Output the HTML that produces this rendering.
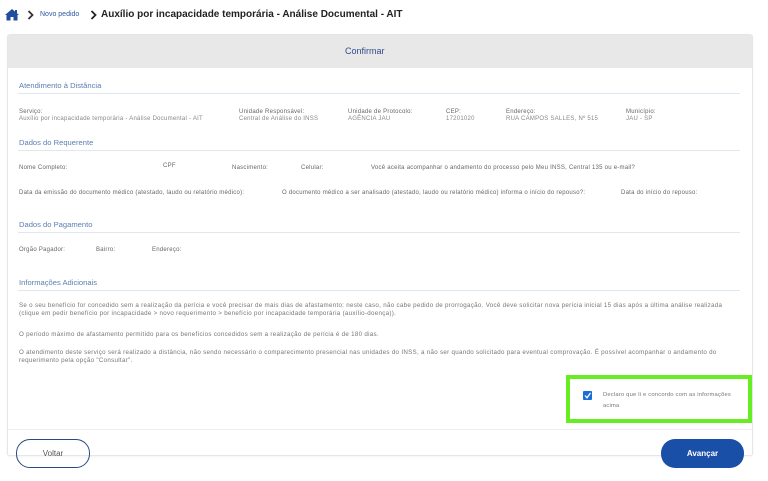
<!DOCTYPE html>
<html><head><meta charset="utf-8"><style>
*{margin:0;padding:0;box-sizing:border-box}
body{width:768px;height:481px;background:#fff;font-family:"Liberation Sans",sans-serif;position:relative;overflow:hidden;color:#555}
.a{position:absolute;white-space:nowrap}
.t{font-size:6px;color:#666;letter-spacing:0.25px}
.v{font-size:6px;color:#888;letter-spacing:0.25px}
.h{font-size:7.6px;color:#5a7fb0}
.line{position:absolute;left:18px;width:722px;height:1px;background:#dfe8ee}
.p{position:absolute;left:19px;font-size:6.2px;color:#777;line-height:8px;width:720px;letter-spacing:0.3px}
</style></head><body>
<svg class="a" style="left:4px;top:8px" width="16" height="13" viewBox="0 0 16 13"><path d="M8 1 L1 7 L2.5 7 L2.5 12.5 L6.5 12.5 L6.5 9 L9.5 9 L9.5 12.5 L13.5 12.5 L13.5 7 L15 7 Z" fill="#1e4e9c"/><rect x="11" y="2" width="2" height="3" fill="#1e4e9c"/></svg>
<svg class="a" style="left:27px;top:10px" width="7" height="10"><path d="M1.5 1 L5.5 5 L1.5 9" stroke="#333" stroke-width="1.8" fill="none"/></svg>
<div class="a" style="left:40px;top:11px;font-size:7px;color:#2c5aa0">Novo pedido</div>
<svg class="a" style="left:90px;top:10px" width="7" height="10"><path d="M1.5 1 L5.5 5 L1.5 9" stroke="#222" stroke-width="1.8" fill="none"/></svg>
<div class="a" style="left:101px;top:9px;font-size:10px;color:#222;font-weight:bold">Auxílio por incapacidade temporária - Análise Documental - AIT</div>

<div class="a" style="left:7px;top:34px;width:746px;height:422px;border:1px solid #e6e6e6;border-radius:3px;background:#fff;box-shadow:0 1px 2px rgba(0,0,0,.05)"></div>
<div class="a" style="left:8px;top:35px;width:744px;height:33px;background:#e8e8e8"></div>
<div class="a" style="left:345px;top:46px;font-size:9px;color:#2f4f8a">Confirmar</div>

<div class="a h" style="left:19px;top:81px">Atendimento à Distância</div>
<div class="line" style="top:93px"></div>
<div class="a t" style="left:19px;top:109px">Serviço:</div>
<div class="a v" style="left:19px;top:116px">Auxílio por incapacidade temporária - Análise Documental - AIT</div>
<div class="a t" style="left:239px;top:109px">Unidade Responsável:</div>
<div class="a v" style="left:239px;top:116px">Central de Análise do INSS</div>
<div class="a t" style="left:348px;top:109px">Unidade de Protocolo:</div>
<div class="a v" style="left:348px;top:116px">AGÊNCIA JAU</div>
<div class="a t" style="left:446px;top:109px">CEP:</div>
<div class="a v" style="left:446px;top:116px">17201020</div>
<div class="a t" style="left:506px;top:109px">Endereço:</div>
<div class="a v" style="left:506px;top:116px">RUA CAMPOS SALLES, Nº 515</div>
<div class="a t" style="left:626px;top:109px">Município:</div>
<div class="a v" style="left:626px;top:116px">JAU - SP</div>

<div class="a h" style="left:19px;top:138px">Dados do Requerente</div>
<div class="line" style="top:150px"></div>
<div class="a t" style="left:19px;top:165px">Nome Completo:</div>
<div class="a t" style="left:163px;top:163px">CPF</div>
<div class="a t" style="left:232px;top:165px">Nascimento:</div>
<div class="a t" style="left:301px;top:165px">Celular:</div>
<div class="a t" style="left:371px;top:165px">Você aceita acompanhar o andamento do processo pelo Meu INSS, Central 135 ou e-mail?</div>
<div class="a t" style="left:19px;top:190px">Data da emissão do documento médico (atestado, laudo ou relatório médico):</div>
<div class="a t" style="left:282px;top:190px">O documento médico a ser analisado (atestado, laudo ou relatório médico) informa o início do repouso?:</div>
<div class="a t" style="left:621px;top:190px">Data do início do repouso:</div>

<div class="a h" style="left:19px;top:220px">Dados do Pagamento</div>
<div class="line" style="top:232px"></div>
<div class="a t" style="left:19px;top:247px">Orgão Pagador:</div>
<div class="a t" style="left:96px;top:247px">Bairro:</div>
<div class="a t" style="left:152px;top:247px">Endereço:</div>

<div class="a h" style="left:19px;top:278px">Informações Adicionais</div>
<div class="line" style="top:290px"></div>
<div class="p" style="top:302px">Se o seu benefício for concedido sem a realização da perícia e você precisar de mais dias de afastamento: neste caso, não cabe pedido de prorrogação. Você deve solicitar nova perícia inicial 15 dias após a última análise realizada<br>(clique em pedir benefício por incapacidade &gt; novo requerimento &gt; benefício por incapacidade temporária (auxílio-doença)).</div>
<div class="p" style="top:331px">O período máximo de afastamento permitido para os benefícios concedidos sem a realização de perícia é de 180 dias.</div>
<div class="p" style="top:349px">O atendimento deste serviço será realizado a distância, não sendo necessário o comparecimento presencial nas unidades do INSS, a não ser quando solicitado para eventual comprovação. É possível acompanhar o andamento do<br>requerimento pela opção "Consultar".</div>

<div class="a" style="left:566px;top:375px;width:186px;height:48px;border:4px solid #66ee22"></div>
<div class="a" style="left:583px;top:391px;width:9px;height:9px;background:#1a6fd6;border-radius:1px"></div>
<svg class="a" style="left:583px;top:391px" width="9" height="9"><path d="M2 4.5 L4 6.8 L7.5 2" stroke="#fff" stroke-width="1.3" fill="none"/></svg>
<div class="a" style="left:603px;top:390px;font-size:5.8px;color:#777;line-height:11px;letter-spacing:0.2px">Declaro que li e concordo com as informações<br>acima</div>

<div class="a" style="left:8px;top:429px;width:744px;height:1px;background:#eee"></div>
<div class="a" style="left:16px;top:439px;width:74px;height:29px;border:1px solid #2c4a80;border-radius:14px;font-size:8px;color:#555;text-align:center;line-height:27px">Voltar</div>
<div class="a" style="left:661px;top:439px;width:83px;height:29px;background:#1a4fa8;border-radius:14px;font-size:8px;color:#fff;font-weight:bold;text-align:center;line-height:29px">Avançar</div>
</body></html>
